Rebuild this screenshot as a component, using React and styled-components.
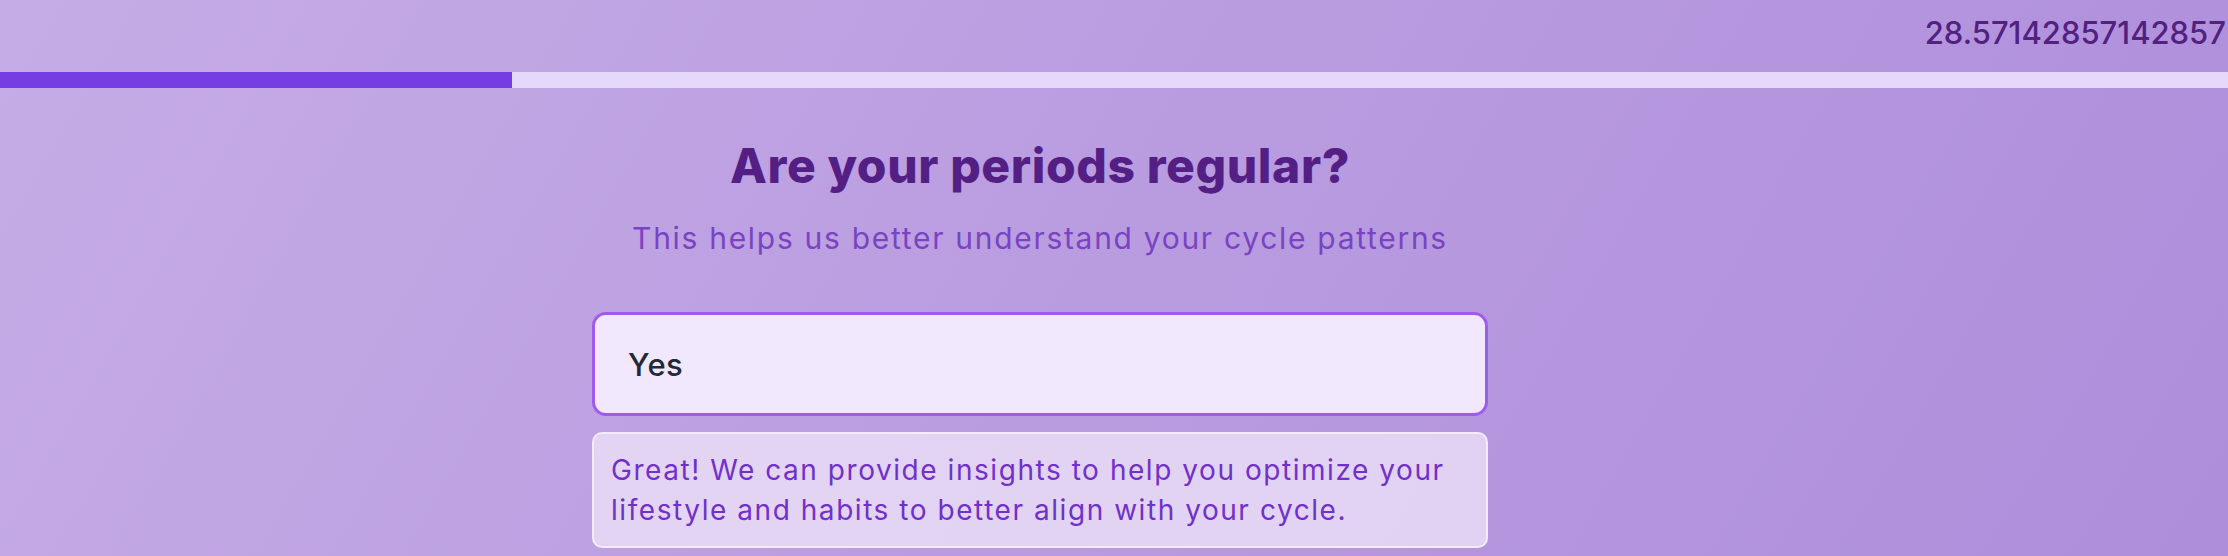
import React from "react";
import styled, { createGlobalStyle } from "styled-components";

const GlobalStyle = createGlobalStyle`
  * {
    box-sizing: border-box;
  }
  body {
    margin: 0;
    font-family: Inter, "Noto Sans", sans-serif;
  }
`;

export default function App() {
  const progress = 28.57142857142857;
  const barWidth = 22.98;

  return (
    <Page>
      <GlobalStyle />
      <TopBar>
        <Percent>{progress}</Percent>
      </TopBar>
      <Track>
        <Fill style={{ width: barWidth + "%" }} />
      </Track>
      <Main>
        <Column>
          <Title>Are your periods regular?</Title>
          <Subtitle>This helps us better understand your cycle patterns</Subtitle>
          <Option selected>Yes</Option>
          <Note>
            Great! We can provide insights to help you optimize your lifestyle
            and habits to better align with your cycle.
          </Note>
        </Column>
      </Main>
    </Page>
  );
}

const Page = styled.div`
  width: 100%;
  min-height: 100vh;
  background: linear-gradient(120deg, #c6ace6 0%, #b99ce0 50%, #ae8ddb 100%);
  overflow: hidden;
`;

const TopBar = styled.div`
  height: 72px;
  display: flex;
  justify-content: flex-end;
  align-items: flex-start;
  padding-top: 13px;
`;

const Percent = styled.span`
  font-size: 31px;
  line-height: 40px;
  font-weight: 500;
  color: #52207f;
  white-space: nowrap;
  margin-right: 2px;
`;

const Track = styled.div`
  width: 100%;
  height: 16px;
  background-color: #e6d8fa;
`;

const Fill = styled.div`
  height: 100%;
  background-color: #763de2;
`;

const Main = styled.div`
  display: flex;
  justify-content: center;
  padding-right: 148px;
`;

const Column = styled.div`
  width: 896px;
  display: flex;
  flex-direction: column;
  align-items: stretch;
`;

const Title = styled.h1`
  margin: 50px 0 0;
  text-align: center;
  font-size: 48px;
  line-height: 56px;
  font-weight: 800;
  color: #531f84;
  letter-spacing: 0.6px;
`;

const Subtitle = styled.p`
  margin: 24px 0 0;
  text-align: center;
  font-size: 30px;
  line-height: 40px;
  font-weight: 400;
  color: #7a43c1;
  letter-spacing: 1.7px;
`;

const Option = styled.div`
  margin-top: 54px;
  height: 104px;
  display: flex;
  align-items: center;
  padding: 0 33px;
  border: 3px solid ${(p) => (p.selected ? "#9f5cec" : "transparent")};
  border-radius: 14px;
  background-color: #f2e8fd;
  font-size: 31px;
  font-weight: 500;
  color: #1f2937;
  letter-spacing: 0.5px;
`;

const Note = styled.div`
  margin-top: 16px;
  padding: 16px 17px;
  border: 2px solid rgba(246, 238, 252, 0.85);
  border-radius: 10px;
  background-color: rgba(240, 230, 250, 0.75);
  font-size: 28px;
  line-height: 40px;
  color: #7130c9;
  letter-spacing: 1.55px;
`;
